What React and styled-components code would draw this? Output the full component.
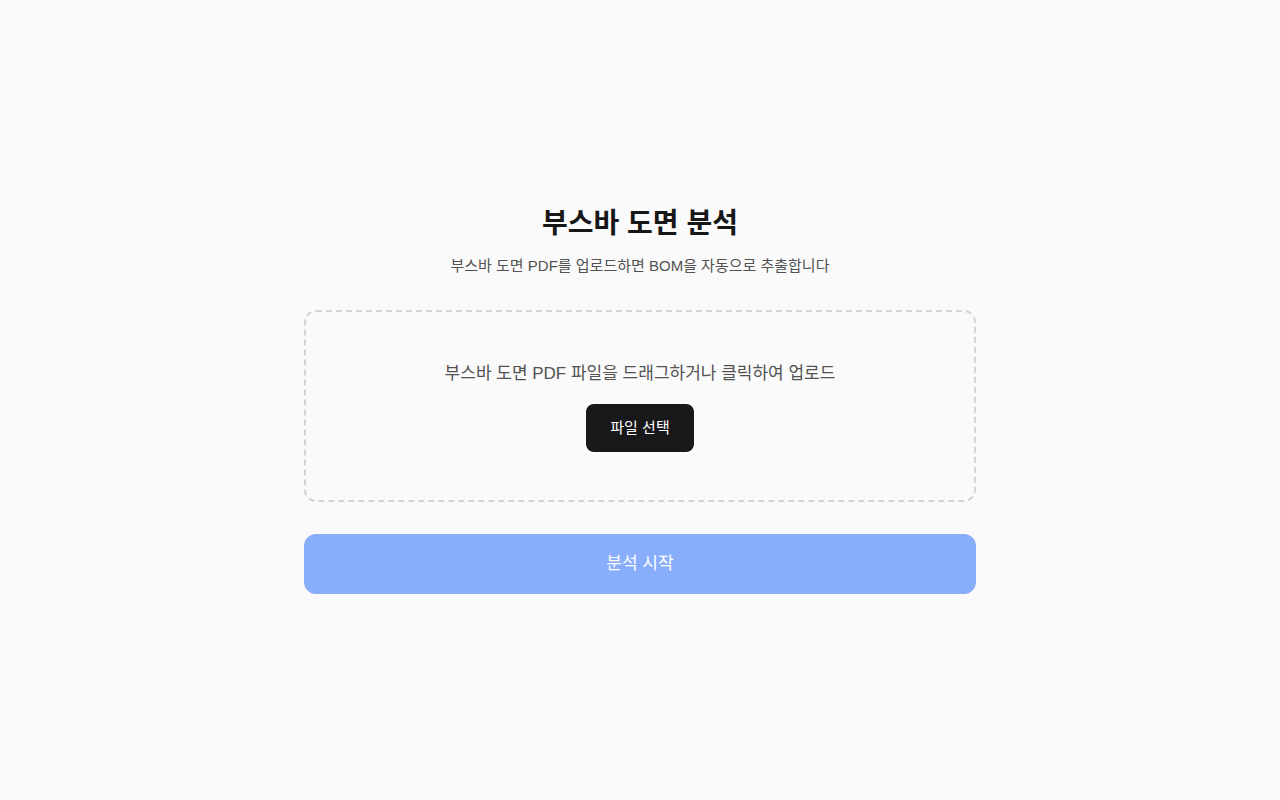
import React from 'react';
import styled, { createGlobalStyle } from 'styled-components';

const GlobalStyle = createGlobalStyle`
  * {
    box-sizing: border-box;
  }
  body {
    margin: 0;
    background: #fafafa;
    font-family: "Liberation Sans", "Noto Sans CJK KR", sans-serif;
    color: #171717;
  }
`;

const Page = styled.main`
  min-height: 100vh;
  display: flex;
  align-items: center;
  justify-content: center;
`;

const Container = styled.div`
  width: 672px;
  display: flex;
  flex-direction: column;
  align-items: stretch;
`;

const Title = styled.h1`
  margin: 0 0 12px 0;
  font-size: 28px;
  line-height: 36px;
  font-weight: 600;
  text-align: center;
  color: #171717;
`;

const Subtitle = styled.p`
  margin: 0 0 32px 0;
  font-size: 15px;
  line-height: 24px;
  text-align: center;
  color: #525252;
`;

const DropZone = styled.div`
  border: 2px dashed #d4d4d4;
  border-radius: 12px;
  padding: 48px 24px;
  display: flex;
  flex-direction: column;
  align-items: center;
  gap: 16px;
  cursor: pointer;
`;

const DropText = styled.p`
  margin: 0;
  font-size: 17px;
  line-height: 28px;
  color: #525252;
`;

const SelectButton = styled.button`
  border: none;
  border-radius: 8px;
  background: #18181b;
  color: #ffffff;
  font-family: inherit;
  font-size: 15px;
  line-height: 24px;
  padding: 12px 24px;
  cursor: pointer;
`;

const StartButton = styled.button`
  margin-top: 32px;
  border: none;
  border-radius: 12px;
  background: #88adfb;
  color: #ffffff;
  font-family: inherit;
  font-size: 17px;
  line-height: 24px;
  padding: 18px 0;
  cursor: not-allowed;
`;

export default function App() {
  return (
    <>
      <GlobalStyle />
      <Page>
        <Container>
          <Title>부스바 도면 분석</Title>
          <Subtitle>부스바 도면 PDF를 업로드하면 BOM을 자동으로 추출합니다</Subtitle>
          <DropZone>
            <DropText>부스바 도면 PDF 파일을 드래그하거나 클릭하여 업로드</DropText>
            <SelectButton>파일 선택</SelectButton>
          </DropZone>
          <StartButton disabled>분석 시작</StartButton>
        </Container>
      </Page>
    </>
  );
}
